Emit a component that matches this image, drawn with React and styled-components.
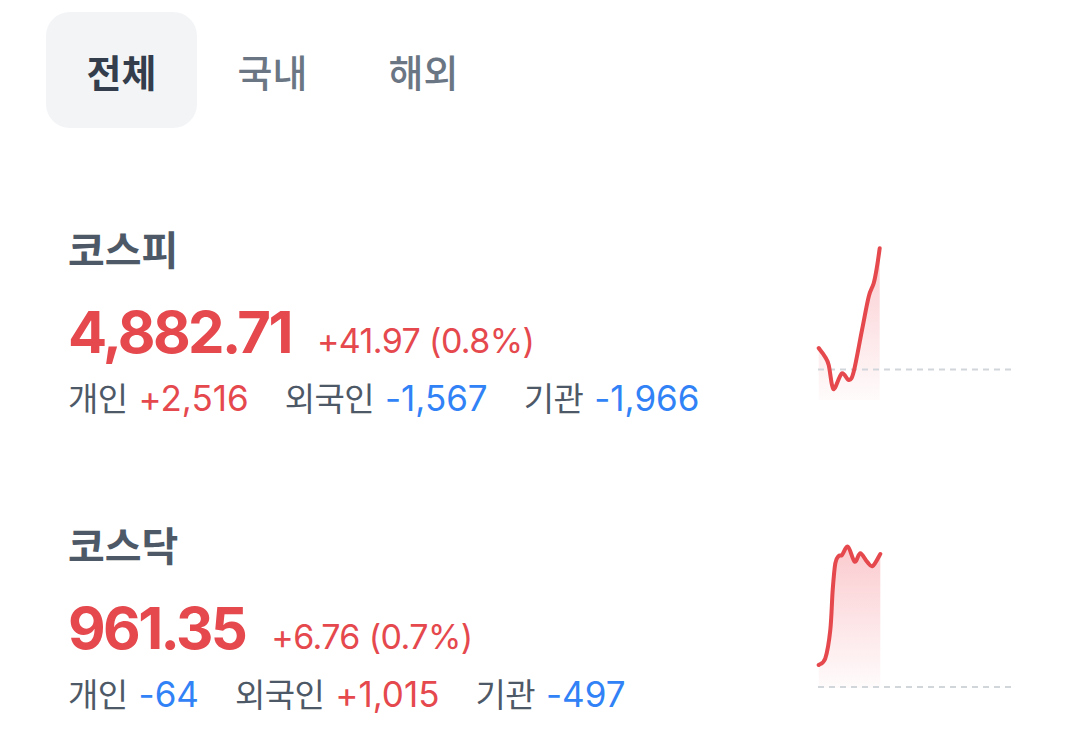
import styled, { createGlobalStyle } from 'styled-components';

const GlobalStyle = createGlobalStyle`
  body {
    margin: 0;
    background: #ffffff;
    font-family: Inter, "Noto Sans CJK KR", sans-serif;
  }
`;

const UP = '#e5484d';
const DOWN = '#3182f6';

const Page = styled.div`
  width: 1074px;
  height: 754px;
  padding: 12px 58px 0 46px;
  box-sizing: border-box;
  overflow: hidden;
`;

const Tabs = styled.div`
  display: flex;
`;

const Tab = styled.button`
  width: 151px;
  height: 116px;
  border: none;
  border-radius: 24px;
  background: ${(p) => (p.$active ? '#f2f4f6' : 'transparent')};
  color: ${(p) => (p.$active ? '#333d4b' : '#6b7684')};
  font-family: "Noto Sans CJK KR", sans-serif;
  font-size: 38px;
  font-weight: ${(p) => (p.$active ? 700 : 500)};
  padding: 0;
`;

const List = styled.div`
  display: flex;
  flex-direction: column;
  gap: 96px;
  margin-top: 94px;
`;

const Row = styled.div`
  display: flex;
  justify-content: space-between;
  align-items: flex-start;
  padding-left: 22px;
`;

const Info = styled.div`
  display: flex;
  flex-direction: column;
`;

const Name = styled.div`
  font-family: "Noto Sans CJK KR", sans-serif;
  font-size: 40px;
  font-weight: 700;
  color: #4e5968;
  line-height: 52px;
`;

const PriceLine = styled.div`
  display: flex;
  align-items: baseline;
  gap: 26px;
  margin-top: 25px;
`;

const Price = styled.span`
  font-size: 58px;
  font-weight: 700;
  letter-spacing: -2.6px;
  color: ${UP};
  line-height: 66px;
`;

const Change = styled.span`
  font-size: 34px;
  letter-spacing: -0.6px;
  color: ${UP};
`;

const Flows = styled.div`
  display: flex;
  align-items: baseline;
  gap: 36px;
  margin-top: 10px;
  font-size: 33px;
  line-height: 46px;
`;

const Flow = styled.span`
  color: #4e5968;
  letter-spacing: -0.6px;

  b {
    font-size: 35px;
    font-weight: 400;
    letter-spacing: 0;
    margin-left: 11px;
    color: ${(p) => (p.$up ? UP : DOWN)};
  }
`;

const Chart = styled.div`
  flex: none;
  margin-top: ${(p) => p.$offset}px;
`;

function smooth(pts) {
  let d = `M${pts[0][0]},${pts[0][1]}`;
  for (let i = 0; i < pts.length - 1; i += 1) {
    const p0 = pts[i - 1] || pts[i];
    const p1 = pts[i];
    const p2 = pts[i + 1];
    const p3 = pts[i + 2] || p2;
    const c1 = [p1[0] + (p2[0] - p0[0]) / 6, p1[1] + (p2[1] - p0[1]) / 6];
    const c2 = [p2[0] - (p3[0] - p1[0]) / 6, p2[1] - (p3[1] - p1[1]) / 6];
    d += ` C${c1[0]},${c1[1]} ${c2[0]},${c2[1]} ${p2[0]},${p2[1]}`;
  }
  return d;
}

function Sparkline({ id, points, base, bottom }) {
  const line = smooth(points);
  const last = points[points.length - 1];
  const area = `${line} L${last[0]},${bottom} L${points[0][0]},${bottom} Z`;
  return (
    <svg width="200" height="160" viewBox="0 0 200 160">
      <defs>
        <linearGradient id={id} x1="0" y1="0" x2="0" y2="1">
          <stop offset="0" stopColor="#f04452" stopOpacity="0.28" />
          <stop offset="1" stopColor="#f04452" stopOpacity="0.02" />
        </linearGradient>
      </defs>
      <path d={area} fill={`url(#${id})`} />
      <line x1="2" y1={base} x2="199" y2={base} stroke="#d1d6db" strokeWidth="2" strokeDasharray="6 5" />
      <path d={line} fill="none" stroke={UP} strokeWidth="4" strokeLinejoin="round" strokeLinecap="round" />
    </svg>
  );
}

const markets = [
  {
    id: 'kospi',
    name: '코스피',
    price: '4,882.71',
    change: '+41.97 (0.8%)',
    offset: 18,
    base: 129.5,
    bottom: 160,
    points: [[2.7, 108], [9, 116.7], [12.7, 125], [16, 145], [18.7, 148.3], [26, 133.3], [32.7, 140], [37.7, 131.7], [46, 90], [52.7, 56.7], [57.7, 43.3], [61, 26.7], [63.7, 8.3]],
    flows: [['개인', '+2,516', true], ['외국인', '-1,567', false], ['기관', '-1,966', false]],
  },
  {
    id: 'kosdaq',
    name: '코스닥',
    price: '961.35',
    change: '+6.76 (0.7%)',
    offset: 22,
    base: 147,
    bottom: 148,
    points: [[2.7, 125], [9.3, 118.3], [14.3, 90], [16.7, 50], [19.3, 23.3], [22.7, 16], [26, 15], [32, 6.7], [38.7, 21.7], [44.3, 13.3], [51, 21.7], [56.7, 26], [64.3, 14]],
    flows: [['개인', '-64', false], ['외국인', '+1,015', true], ['기관', '-497', false]],
  },
];

export default function App() {
  return (
    <Page>
      <GlobalStyle />
      <Tabs>
        <Tab $active>전체</Tab>
        <Tab>국내</Tab>
        <Tab>해외</Tab>
      </Tabs>
      <List>
        {markets.map((m) => (
          <Row key={m.id}>
            <Info>
              <Name>{m.name}</Name>
              <PriceLine>
                <Price>{m.price}</Price>
                <Change>{m.change}</Change>
              </PriceLine>
              <Flows>
                {m.flows.map(([label, value, up]) => (
                  <Flow key={label} $up={up}>
                    {label}
                    <b>{value}</b>
                  </Flow>
                ))}
              </Flows>
            </Info>
            <Chart $offset={m.offset}>
              <Sparkline id={m.id} points={m.points} base={m.base} bottom={m.bottom} />
            </Chart>
          </Row>
        ))}
      </List>
    </Page>
  );
}
